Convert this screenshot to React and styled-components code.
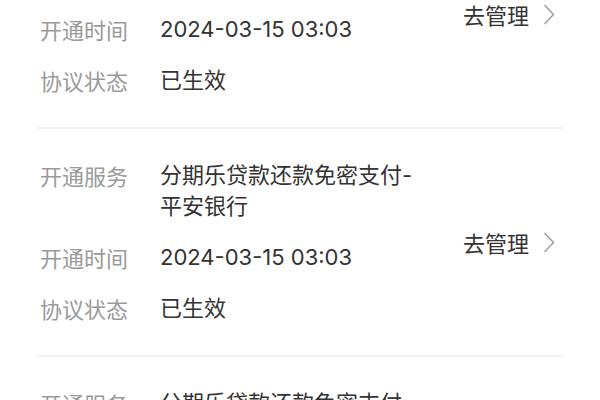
import React from "react";
import styled, { createGlobalStyle } from "styled-components";

const Global = createGlobalStyle`
  html, body { margin: 0; padding: 0; background: #ffffff; }
  body { font-family: "Noto Sans CJK SC", "Noto Sans", sans-serif; overflow: hidden; }
`;

const Page = styled.div`
  width: 600px;
  height: 400px;
  overflow: hidden;
  background: #fff;
`;

const List = styled.div`
  margin-top: -99px;
  padding: 0 38px;
`;

const Block = styled.div`
  display: flex;
  align-items: center;
  padding: 31px 0 31px 2px;
  border-bottom: 2px solid #f2f2f2;
`;

const Rows = styled.div`
  flex: 1;
  display: flex;
  flex-direction: column;
  gap: 20px;
`;

const Row = styled.div`
  display: flex;
  font-size: 22px;
  line-height: 31px;
`;

const Label = styled.div`
  width: 120px;
  flex: none;
  color: #9a9a9a;
`;

const Value = styled.div`
  width: 262px;
  color: #333333;
  font-family: Inter, "Noto Sans CJK SC", sans-serif;
  word-break: break-all;
`;

const Manage = styled.div`
  display: flex;
  align-items: center;
  gap: 14px;
  margin-right: 7px;
  font-size: 22px;
  color: #333333;
`;

const Chevron = () => (
  <svg width="12" height="21" viewBox="0 0 12 21" fill="none">
    <path d="M1.5 1 L10.5 10.5 L1.5 20" stroke="#a0a0a0" strokeWidth="1.5" />
  </svg>
);

const data = [1, 2, 3];

export default function App() {
  return (
    <Page>
      <Global />
      <List>
        {data.map((k) => (
          <Block key={k}>
            <Rows>
              <Row>
                <Label>开通服务</Label>
                <Value>分期乐贷款还款免密支付-平安银行</Value>
              </Row>
              <Row>
                <Label>开通时间</Label>
                <Value>2024-03-15 03:03</Value>
              </Row>
              <Row>
                <Label>协议状态</Label>
                <Value>已生效</Value>
              </Row>
            </Rows>
            <Manage>
              去管理
              <Chevron />
            </Manage>
          </Block>
        ))}
      </List>
    </Page>
  );
}
